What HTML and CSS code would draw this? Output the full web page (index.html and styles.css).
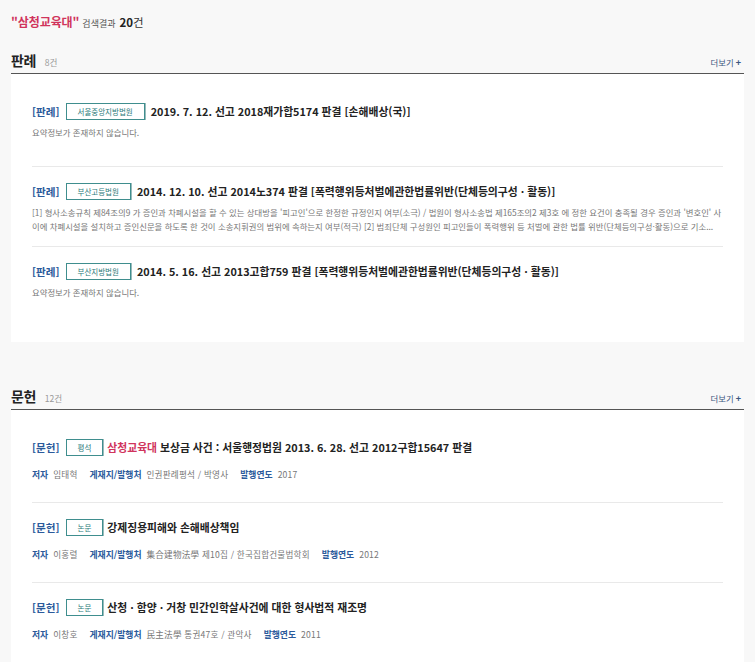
FILE: index.html
```html
<!DOCTYPE html>
<html lang="ko">
<head>
<meta charset="utf-8">
<title>검색결과</title>
<link rel="stylesheet" href="styles.css">
</head>
<body>
<div class="page">
  <div class="summary-head">
    <span class="kw">"삼청교육대"</span>
    <span class="sr">검색결과</span>
    <span class="total"><b>20</b>건</span>
  </div>

  <section class="sec sec-case">
    <div class="sec-head">
      <h2>판례</h2><span class="cnt">8건</span>
      <a class="more">더보기<b>+</b></a>
    </div>
    <ul class="list">
      <li class="item">
        <div class="ttl"><span class="lbl">[판례]</span><span class="badge">서울중앙지방법원</span><span class="tx">2019. 7. 12. 선고 2018재가합5174 판결 [손해배상(국)]</span></div>
        <p class="desc">요약정보가 존재하지 않습니다.</p>
      </li>
      <li class="item">
        <div class="ttl"><span class="lbl">[판례]</span><span class="badge">부산고등법원</span><span class="tx">2014. 12. 10. 선고 2014노374 판결 [폭력행위등처벌에관한법률위반(단체등의구성 · 활동)]</span></div>
        <p class="desc">[1] 형사소송규칙 제84조의9 가 증인과 차폐시설을 할 수 있는 상대방을 '피고인'으로 한정한 규정인지 여부(소극) / 법원이 형사소송법 제165조의2 제3호 에 정한 요건이 충족될 경우 증인과 '변호인' 사이에 차폐시설을 설치하고 증인신문을 하도록 한 것이 소송지휘권의 범위에 속하는지 여부(적극) [2] 범죄단체 구성원인 피고인들이 폭력행위 등 처벌에 관한 법률 위반(단체등의구성·활동)으로 기소...</p>
      </li>
      <li class="item">
        <div class="ttl"><span class="lbl">[판례]</span><span class="badge">부산지방법원</span><span class="tx">2014. 5. 16. 선고 2013고합759 판결 [폭력행위등처벌에관한법률위반(단체등의구성 · 활동)]</span></div>
        <p class="desc">요약정보가 존재하지 않습니다.</p>
      </li>
    </ul>
  </section>

  <section class="sec sec-doc">
    <div class="sec-head">
      <h2>문헌</h2><span class="cnt">12건</span>
      <a class="more">더보기<b>+</b></a>
    </div>
    <ul class="list">
      <li class="item doc">
        <div class="ttl"><span class="lbl">[문헌]</span><span class="badge">평석</span><span class="tx"><em>삼청교육대</em> 보상금 사건 : 서울행정법원 2013. 6. 28. 선고 2012구합15647 판결</span></div>
        <div class="meta"><span class="k">저자</span><span class="v">임태혁</span><span class="k">게재지/발행처</span><span class="v">인권판례평석 / 박영사</span><span class="k">발행연도</span><span class="v">2017</span></div>
      </li>
      <li class="item doc">
        <div class="ttl"><span class="lbl">[문헌]</span><span class="badge">논문</span><span class="tx">강제징용피해와 손해배상책임</span></div>
        <div class="meta"><span class="k">저자</span><span class="v">이홍렬</span><span class="k">게재지/발행처</span><span class="v">集合建物法學 제10집 / 한국집합건물법학회</span><span class="k">발행연도</span><span class="v">2012</span></div>
      </li>
      <li class="item doc">
        <div class="ttl"><span class="lbl">[문헌]</span><span class="badge">논문</span><span class="tx">산청 · 함양 · 거창 민간인학살사건에 대한 형사법적 재조명</span></div>
        <div class="meta"><span class="k">저자</span><span class="v">이창호</span><span class="k">게재지/발행처</span><span class="v">民主法學 통권47호 / 관악사</span><span class="k">발행연도</span><span class="v">2011</span></div>
      </li>
    </ul>
  </section>
</div>
</body>
</html>
```
FILE: styles.css
```css
* { box-sizing: border-box; }
html, body { margin: 0; padding: 0; }
body {
  background: #f8f8f8;
  font-family: "Noto Sans CJK KR", "Noto Sans", sans-serif;
  color: #222;
}
.page { padding: 14px 11px 0 11px; }

.summary-head { display: flex; align-items: baseline; line-height: 16px; height: 16px; }
.summary-head .kw { color: #d0345c; font-weight: 700; font-size: 12px; letter-spacing: -0.1px; }
.summary-head .sr { color: #555; font-size: 9px; margin-left: 3px; }
.summary-head .total { color: #333; font-size: 11.5px; margin-left: 4px; }
.summary-head .total b { font-weight: 700; color: #222; }

.sec-head {
  display: flex; align-items: baseline;
  border-bottom: 1px solid #555;
  height: 24px; line-height: 20px; padding-bottom: 4px;
}
.sec-case .sec-head { margin-top: 20px; }
.sec-doc .sec-head { margin-top: 44px; }
.sec-head h2 { margin: 0; font-size: 14px; font-weight: 700; letter-spacing: -0.5px; color: #222; }
.sec-head .cnt { margin-left: 9px; font-size: 8.6px; color: #999; }
.sec-head .more { margin-left: auto; margin-right: 3px; font-size: 8.4px; color: #3b5680; }
.sec-head .more b { margin-left: 2px; font-size: 9px; }

.list { list-style: none; margin: 0; padding: 13px 0 15px; background: #fff; }
.item { margin: 0 21px; height: 80px; padding-top: 16px; border-bottom: 1px solid #e9e9e9; }
.item:last-child { border-bottom: 0; }
.item.doc { padding-top: 16px; }

.ttl { display: flex; align-items: center; height: 16px; white-space: nowrap; }
.lbl { color: #2b5a9b; font-weight: 700; font-size: 10.6px; }
.badge {
  margin-left: 6px; height: 17px; padding: 0 11px;
  border: 1px solid #3f8e8e; box-shadow: 1px 0 0 #9bb;
  color: #2b7a7a; font-size: 7.5px; line-height: 15px;
}
.tx { margin-left: 6px; font-weight: 700; font-size: 10.8px; color: #222; }
.doc .tx { margin-left: 4px; }
.tx em { font-style: normal; color: #d0345c; }

.desc {
  margin: 6px 0 0; font-size: 8.4px; line-height: 14px; color: #777;
}

.meta { margin-top: 12px; line-height: 14px; display: flex; align-items: baseline; white-space: nowrap; }
.meta .k { color: #2b5a9b; font-weight: 700; font-size: 8.8px; margin-right: 5px; }
.meta .v { color: #777; font-size: 8.6px; letter-spacing: 0.2px; margin-right: 12px; }
```
